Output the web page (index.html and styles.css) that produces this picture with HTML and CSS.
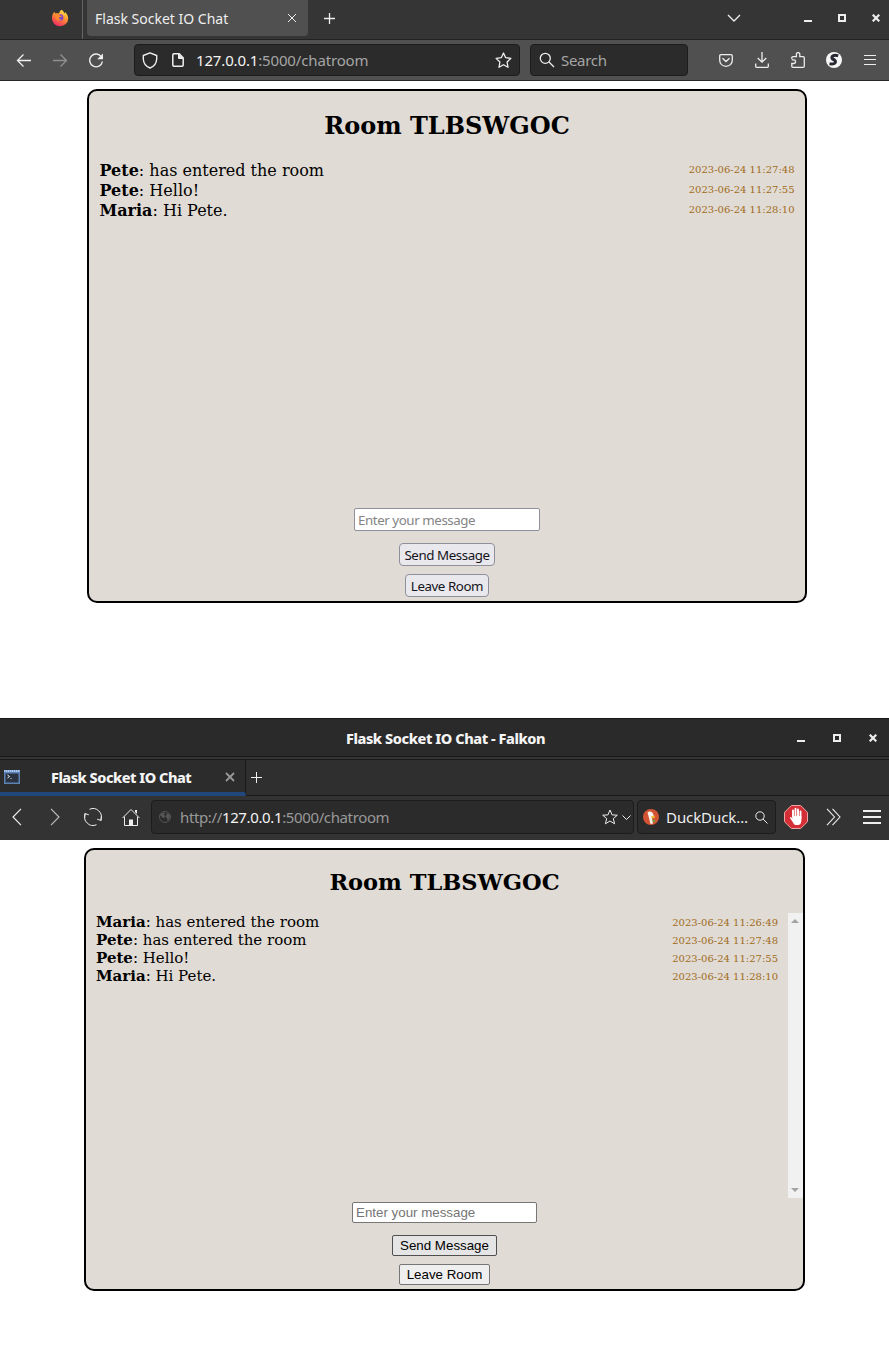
FILE: index.html
```
<!DOCTYPE html>
<html lang="en">
<head>
<meta charset="utf-8">
<title>Flask Socket IO Chat</title>
<link rel="stylesheet" href="styles.css">
</head>
<body>
<section class="window firefox">
  <header class="fx-tabs">
    <div class="fx-pinned">
      <svg width="18" height="18" viewBox="0 0 18 18"><defs><linearGradient id="fire" x1=".8" y1="0" x2=".3" y2="1"><stop stop-color="#fff04a"/><stop offset=".45" stop-color="#ff9131"/><stop offset="1" stop-color="#f02766"/></linearGradient></defs><path d="M10.6.8C12 2 13 3 13.4 4.400C14 4 14 3.500 14 3C16 5 17.200 7 17.200 9.700A8.100 7.600 0 0 1 1 9.500C.9 7 1.700 4.500 3.300 2.800L4.200 4.600C5.500 4 7 4 8 4.600C8.400 3 9 1.700 10.6.8Z" fill="url(#fire)"/><circle cx="9" cy="8.600" r="3.300" fill="#7545cf"/><path d="M4.500 5.500C6 4.800 8 5 9 6.500L11 7C10.500 8 9.500 8.300 8 8.400C7.500 9 8.500 10.700 10.500 10.200C9 12.800 5.500 12 4.700 9.300Z" fill="#ff8a2b"/></svg>
    </div>
    <div class="fx-tab"><span class="fx-tab-title">Flask Socket IO Chat</span>
      <svg class="ink" width="10" height="10" viewBox="0 0 10 10"><path d="M1 1l8 8M9 1l-8 8"/></svg>
    </div>
    <svg class="ink fx-plus" width="12" height="12" viewBox="0 0 12 12"><path d="M5.500 0v11M0 5.500h11" stroke-width="1.300"/></svg>
    <svg class="ink fx-all" width="14" height="8" viewBox="0 0 14 8"><path d="M1 1l6 6 6-6" stroke-width="1.300"/></svg>
    <div class="controls fx-controls">
      <i class="minimize"></i><i class="maximize"></i>
      <svg width="8" height="8" viewBox="0 0 8 8"><path d="M.7.7l6.600 6.600M7.300.7L.7 7.300" stroke="#eee" stroke-width="2.200"/></svg>
    </div>
  </header>
  <nav class="fx-toolbar">
    <div class="fx-nav">
      <svg class="ink" width="16" height="16" viewBox="0 0 16 16"><path d="M15 8.500H1.500M7.500 2.500L1.500 8.500l6 6" stroke-width="1.300"/></svg>
      <svg class="ink dim" width="16" height="16" viewBox="0 0 16 16"><path d="M1 8.500h13.500M8.500 2.500l6 6-6 6" stroke-width="1.300"/></svg>
      <svg class="ink" width="16" height="16" viewBox="0 0 16 16"><path d="M13.500 5A6.400 6.400 0 1 0 14.400 9.500" stroke-width="1.400"/><path d="M15 1.500v5.800H9.200z" fill="#eee" stroke="none"/></svg>
    </div>
    <div class="field fx-url">
      <svg class="ink" width="16" height="17" viewBox="0 0 16 17"><path d="M8 .8L14.700 3.500V7C14.500 11 12 14.500 8 16C4 14.500 1.500 11 1.300 7V3.500Z" stroke-width="1.400" stroke-linejoin="round"/></svg>
      <svg class="ink fx-page" width="12" height="14" viewBox="0 0 12 14"><path d="M2 .8h5.200l4 4V12q0 1.200-1.200 1.200H2Q.8 13.200.8 12V2Q.8.8 2 .8z" stroke-width="1.500"/><path d="M6.500 1v4.500H11z" fill="#eee"/></svg>
      <span class="fx-address"><b>127.0.0.1</b>:5000/chatroom</span>
      <svg class="ink push" width="17" height="17" viewBox="0 0 17 17"><path d="M8.500 1l2.200 4.700 5.200.7-3.800 3.600.9 5.300-4.500-2.600L4 15.300l.9-5.300L1.100 6.400l5.200-.7z" stroke-width="1.300" stroke-linejoin="round"/></svg>
    </div>
    <div class="field fx-search">
      <svg class="ink" width="16" height="16" viewBox="0 0 16 16"><circle cx="6.300" cy="6.300" r="5" stroke-width="1.300"/><path d="M10 10l5 5" stroke-width="1.300"/></svg>
      <span>Search</span>
    </div>
    <div class="fx-actions">
      <svg class="ink" width="14" height="13" viewBox="0 0 14 13"><path d="M2 .7h10q1.300 0 1.300 1.300v4C13.300 10 10.500 12.300 7 12.300S.7 10 .7 6V2Q.7.7 2 .7zM3.500 4.200L7 7.500l3.500-3.300" stroke-width="1.300"/></svg>
      <svg class="ink" width="14" height="16" viewBox="0 0 14 16"><path d="M7 0v10M2.700 6L7 10.200 11.300 6M.7 11.500v3q0 .8.8.8h11q.8 0 .8-.8v-3" stroke-width="1.300"/></svg>
      <svg class="ink" width="14" height="16" viewBox="0 0 14 16"><path d="M.8 7V5.700Q.8 4.600 2 4.600h3.400V2.300a1.700 1.700 0 0 1 3.400 0v2.300h3.300q1.200 0 1.200 1.200v8.300q0 1.200-1.200 1.200H2Q.8 15.300.8 14.100v-2.600h2a1.800 1.800 0 0 0 0-3.600H.8" stroke-width="1.300"/></svg>
      <svg width="16" height="16" viewBox="0 0 16 16"><circle cx="8" cy="8" r="8" fill="#f7f7f7"/><path d="M12.200 3.900C8 2.300 4.300 4.500 6.500 7C11 8.900 10.500 12.700 3.500 11.800" fill="none" stroke="#292933" stroke-width="3"/></svg>
      <svg class="ink" width="12" height="12" viewBox="0 0 12 12"><path d="M0 1.500h12M0 5.500h12M0 10.500h12" stroke-width="1.200"/></svg>
    </div>
  </nav>
  <main class="fx-page-body">
    <div class="room room-one">
      <h2>Room TLBSWGOC</h2>
      <div class="messages">
        <p><span><b>Pete</b>: has entered the room</span><time>2023-06-24 11:27:48</time></p>
        <p><span><b>Pete</b>: Hello!</span><time>2023-06-24 11:27:55</time></p>
        <p><span><b>Maria</b>: Hi Pete.</span><time>2023-06-24 11:28:10</time></p>
      </div>
      <input type="text" placeholder="Enter your message">
      <button class="send">Send Message</button>
      <button class="leave">Leave Room</button>
    </div>
  </main>
</section>

<section class="window falkon">
  <header class="fk-title">
    <span class="fk-name">Flask Socket IO Chat - Falkon</span>
    <div class="controls fk-controls">
      <i class="minimize"></i><i class="maximize"></i>
      <svg width="8" height="8" viewBox="0 0 8 8"><path d="M.7.7l6.600 6.600M7.300.7L.7 7.300" stroke="#eee" stroke-width="2.200"/></svg>
    </div>
  </header>
  <div class="fk-tabs">
    <div class="fk-tab">
      <svg width="16" height="14" viewBox="0 0 16 14"><rect width="16" height="14" fill="#5f82b4"/><path d="M0 1h16" stroke="#a9c9f3" stroke-width="2" stroke-dasharray="1.500 .5"/><path d="M1.500 3.500h13v9h-13z" fill="#2b3340"/><path d="M3.500 5l2 1.500-2 1.500" fill="none" stroke="#eee"/><path d="M6 8.500h2" stroke="#888"/></svg>
      <span>Flask Socket IO Chat</span>
      <svg width="10" height="10" viewBox="0 0 10 10"><path d="M1 1l8 8M9 1L1 9" stroke="#999" stroke-width="1.800"/></svg>
    </div>
    <svg class="ink fk-plus" width="11" height="11" viewBox="0 0 11 11"><path d="M5.500 0v11M0 5.500h11"/></svg>
  </div>
  <nav class="fk-toolbar">
    <div class="fk-nav">
      <svg class="ink" width="10" height="18" viewBox="0 0 10 18"><path d="M9 .8L1 9l8 8.200" stroke-width="1.200"/></svg>
      <svg class="ink soft" width="10" height="18" viewBox="0 0 10 18"><path d="M1 .8L9 9l-8 8.200" stroke-width="1.200"/></svg>
      <svg class="ink" width="18" height="18" viewBox="0 0 18 18"><path d="M5.500 1.300A8.400 8.400 0 0 1 16.800 12M12.500 16.700A8.400 8.400 0 0 1 1.200 6M.8 9.500V5.500L4.800 6.800M17.200 8.500v4L13.200 11.200"/></svg>
      <svg class="ink" width="18" height="18" viewBox="0 0 18 18"><path d="M.5 10L9 1.500l8.500 8.500M2.500 8.500v9h13v-9"/><path d="M13 2h2v4l-2-2zM7 11.500h4v6H7z" fill="#eee" stroke="none"/></svg>
    </div>
    <div class="field fk-url">
      <svg width="12" height="12" viewBox="0 0 12 12"><circle cx="6" cy="6" r="5.500" fill="none" stroke="#555"/><path d="M1 4l2-2 3-.5-1 2.500 1.500 1-2 2.500L3 6zM8 2l3 2-.5 4-2 2-.5-3-1.500-1z" fill="#555"/></svg>
      <span>http://<b>127.0.0.1</b>:5000/chatroom</span>
      <svg class="ink push" width="16" height="16" viewBox="0 0 16 16"><path d="M8 1l2.100 4.900 5.200.3-4 3.400 1.300 5.200L8 12l-4.600 2.800 1.300-5.200-4-3.400 5.200-.3z"/></svg>
      <svg class="ink fk-drop" width="9" height="5" viewBox="0 0 9 5"><path d="M.5.5l4 4 4-4"/></svg>
    </div>
    <div class="field fk-search">
      <svg width="16" height="16" viewBox="0 0 16 16"><circle cx="8" cy="8" r="8" fill="#d35435"/><path d="M4.500 3.500C6.500 1.500 10 2.500 10.500 6l.5 2-2 1.500 1 5-2.500.5L6 9z" fill="#f5f2e9"/><path d="M8.300 7.200l4-.5-1 1.600 1.300.8-4 .1z" fill="#f5b72c"/><path d="M9.500 10.500l3 1-1 1.500-2-.5z" fill="#63a742"/></svg>
      <span>DuckDuck…</span>
      <svg class="ink" width="13" height="13" viewBox="0 0 13 13"><circle cx="5" cy="5" r="4.200"/><path d="M8 8l4.500 4.500"/></svg>
    </div>
    <svg class="fk-block" width="24" height="24" viewBox="0 0 24 24"><path d="M7.300.5h9.400l6.800 6.800v9.400l-6.800 6.800H7.300L.5 16.700V7.300z" fill="#d42e36" stroke="#eba6a7"/><path d="M9 12V5.500M11.500 12V3.800M14 12V4.500M16.500 13V6.500" stroke="#fff" stroke-width="1.900" stroke-linecap="round"/><path d="M8.100 11h9.300v4.500Q17 20 14 20h-2.200Q10 20 9 17.500L6 13q0-1.300 1.200-.8l1.500 1.500z" fill="#fff"/></svg>
    <svg class="ink fk-more" width="16" height="18" viewBox="0 0 16 18"><path d="M1 .8L8.500 9 1 17.200M6.500.8L14 9l-7.500 8.200" stroke-width="1.100"/></svg>
    <svg class="ink fk-menu" width="18" height="14" viewBox="0 0 18 14"><path d="M0 1h18M0 7h18M0 13h18" stroke-width="2"/></svg>
  </nav>
  <main class="fk-page-body">
    <div class="room room-two">
      <h2>Room TLBSWGOC</h2>
      <div class="scroll-area">
        <div class="messages">
          <p><span><b>Maria</b>: has entered the room</span><time>2023-06-24 11:26:49</time></p>
          <p><span><b>Pete</b>: has entered the room</span><time>2023-06-24 11:27:48</time></p>
          <p><span><b>Pete</b>: Hello!</span><time>2023-06-24 11:27:55</time></p>
          <p><span><b>Maria</b>: Hi Pete.</span><time>2023-06-24 11:28:10</time></p>
        </div>
        <div class="scrollbar"><i class="up"></i><i class="down"></i></div>
      </div>
      <input type="text" placeholder="Enter your message">
      <button class="send">Send Message</button>
      <button class="leave">Leave Room</button>
    </div>
  </main>
</section>
</body>
</html>
```
FILE: styles.css
```
* { box-sizing: border-box; }
body { margin: 0; background: #fff; width: 889px; height: 1360px; overflow: hidden; font-family: "Noto Sans", sans-serif; }
svg { display: block; flex: none; }
.ink { fill: none; stroke: #eee; }
.dim { stroke: #909090; }
.soft { stroke: #bbb; }
.push { margin-left: auto; }
span { white-space: nowrap; }
.firefox { height: 718px; }

/* Firefox chrome */
.fx-tabs { height: 40px; background: #353535; border-bottom: 1px solid #222; display: flex; align-items: center; }
.fx-pinned { width: 83px; height: 39px; border-right: 1px solid #656565; padding: 9px 0 0 51px; }
.fx-tab { align-self: flex-start; width: 221px; height: 36px; margin-left: 4px; padding: 0 11px 0 8px; border-radius: 0 0 4px 4px; background: #505050; color: #eee; display: flex; align-items: center; justify-content: space-between; font-size: 14px; }
.fx-plus { margin-left: 16px; margin-top: -1px; }
.fx-all { margin-left: 391px; margin-top: -4px; }
.controls { display: flex; }
.fx-controls { margin: -3px 9px 0 auto; gap: 26px; }
.minimize { width: 8px; height: 2px; background: #eee; margin-top: 6px; }
.maximize { width: 8px; height: 8px; border: 2px solid #eee; }
.fx-toolbar { height: 41px; background: #505050; border-bottom: 1px solid #282828; display: flex; align-items: center; }
.fx-nav { display: flex; width: 134px; gap: 20px; padding-left: 16px; }
.field { display: flex; align-items: center; background: #2b2b2b; border: 1px solid #1c1c1c; border-radius: 4px; }
.fx-url { width: 386px; height: 32px; padding: 0 7px; }
.fx-page { margin-left: 14px; }
.fx-address { margin-left: 12px; color: #a5a5a5; font-size: 15px; letter-spacing: -.15px; }
.fx-address b, .fk-url b { font-weight: 400; color: #f4f4f4; }
.fx-search { width: 158px; height: 32px; margin-left: 10px; padding-left: 8px; gap: 6px; color: #a5a5a5; font-size: 15px; letter-spacing: -.3px; }
.fx-actions { display: flex; align-items: center; justify-content: space-between; width: 157px; margin-left: 31px; }
.fx-page-body { padding: 8px 0 0 87px; }

/* Chat rooms */
.room { border: 2px solid #000; border-radius: 10px; background: #e0dbd4; color: #000; display: flex; flex-direction: column; align-items: center; font-family: "DejaVu Serif", serif; }
.room h2, .room p { margin: 0; }
.room p { display: flex; justify-content: space-between; align-items: center; }
.room time { font-size: 10px; color: #a06b20; }
.room button, .room input { display: block; flex: none; margin: 0; }
.room-one { width: 720px; height: 514px; }
.room-one h2 { height: 69px; padding-top: 18px; font-size: 24px; line-height: 34px; }
.room-one .messages { align-self: stretch; height: 348px; padding: 0 10.500px; }
.room-one p { font-size: 16px; height: 20px; line-height: 20px; }
.room-one p span { padding-top: 2px; }
.room-one input, .room-one button { height: 23px; font-family: "Noto Sans", sans-serif; font-size: 13.333px; letter-spacing: -.43px; border: 1px solid #8f8f9d; }
.room-one input { width: 186px; padding: 1px 3px; border-radius: 2px; background: #fff; }
.room-one input::placeholder { color: #858585; }
.room-one button { border-radius: 4px; background: #e9e9ed; padding: 1px 0 0; color: #15141a; line-height: 20px; }
.room-one .send { width: 96px; margin-top: 12px; }
.room-one .leave { width: 84px; margin-top: 8px; }

/* Falkon chrome */
.fk-title { height: 42px; background: #2a2a2a; border-top: 1px solid #171717; display: flex; align-items: center; box-shadow: inset 0 -1px #191919, inset 0 -3px #353535, inset 0 -4px #191919; }
.fk-name { margin-left: 346px; margin-top: -4px; font-size: 14.500px; font-weight: 800; color: #f4f4f4; letter-spacing: -.43px; }
.fk-controls { gap: 28px; margin: -4px 12px 0 auto; }
.fk-tabs { height: 36px; background: #2f2f2f; display: flex; align-items: center; box-shadow: inset 0 -1px #191919; }
.fk-tab { width: 246px; height: 36px; border-right: 1px solid #191919; border-bottom: 4px solid #20487d; background: #2c2c2c; padding: 2px 10px 0 4px; display: flex; align-items: center; color: #f4f4f4; font-size: 14.500px; font-weight: 800; letter-spacing: -.5px; }
.fk-tab span { margin: 0 auto 0 31px; }
.fk-plus { margin-left: 5px; margin-top: -1px; }
.fk-toolbar { height: 44px; background: #333; display: flex; align-items: center; padding-bottom: 2px; }
.fk-nav { width: 151px; padding-left: 12px; display: flex; }
.fk-nav svg:nth-child(2) { margin: 0 24px 0 28px; }
.fk-nav svg:nth-child(3) { margin-right: 20px; }
.fk-url { width: 483px; height: 34px; padding: 0 2px 0 7px; color: #999; font-size: 15px; letter-spacing: -.37px; }
.fk-url span { margin-left: 9px; }
.fk-drop { margin-left: 4px; }
.fk-search { width: 139px; height: 34px; margin-left: 3px; padding: 0 7px 0 5px; justify-content: space-between; color: #eee; font-size: 15px; letter-spacing: -.1px; }
.fk-block { margin-left: 8px; }
.fk-more { margin-left: 18px; }
.fk-menu { margin-left: 21px; }
.fk-page-body { padding: 8px 0 0 84px; }
.room-two { width: 721px; height: 443px; }
.room-two h2 { height: 63px; padding-top: 16px; font-size: 22.500px; line-height: 32px; }
.scroll-area { display: flex; align-self: stretch; height: 285px; }
.scroll-area .messages { flex: 1; padding: 0 10px; }
.room-two p { height: 18px; font-size: 15px; line-height: 18px; }
.room-two time { padding-top: 2px; }
.scrollbar { width: 15px; background: #f1f1f1; padding: 6px 4px 6px 3px; display: flex; flex-direction: column; justify-content: space-between; }
.up, .down { border: 4px solid transparent; width: 8px; height: 4px; }
.up { border-top: 0; border-bottom-color: #a3a3a3; }
.down { border-bottom: 0; border-top-color: #a3a3a3; }
.room-two input, .room-two button { height: 21px; font-family: "Liberation Sans", sans-serif; font-size: 13.333px; border: 1px solid #767676; border-radius: 2px; }
.room-two input { width: 185px; margin-top: 4px; padding: 1px 3px; background: #fff; }
.room-two input::placeholder { color: #757575; }
.room-two button { background: #efefef; color: #000; padding: 0; }
.room-two .send { width: 105px; margin-top: 12px; background: #e5e5e5; border-color: #4f4f4f; }
.room-two .leave { width: 91px; margin-top: 8px; }
```
